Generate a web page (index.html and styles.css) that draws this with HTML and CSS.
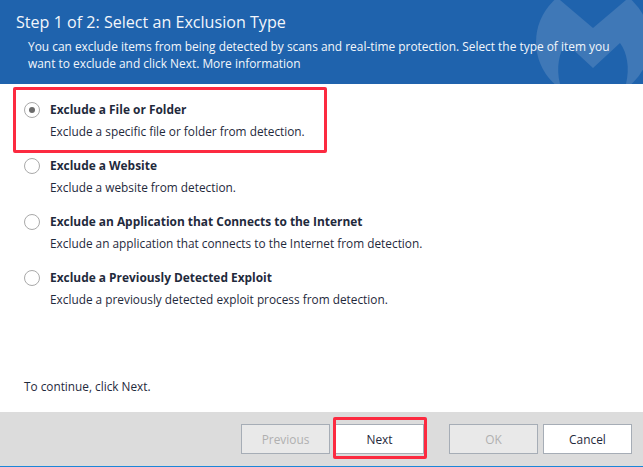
FILE: index.html
```html
<!DOCTYPE html>
<html lang="en">
<head>
<meta charset="utf-8">
<title>Select an Exclusion Type</title>
<link rel="stylesheet" href="styles.css">
</head>
<body>
<div class="window">
  <header class="header">
    <svg class="logo" width="120" height="84" viewBox="0 0 120 84">
      <circle class="logo-disc" cx="70" cy="42" r="57"/>
      <path class="logo-blue" d="M37 0L70 28L103 0Z"/>
      <path class="logo-blue" d="M37 84C33 68 36 52 43 43L70 68L97 43C104 52 107 68 103 84Z"/>
    </svg>
    <h1 class="title">Step 1 of 2: Select an Exclusion Type</h1>
    <p class="intro">You can exclude items from being detected by scans and real-time protection. Select the type of item you want to exclude and click Next. More information</p>
  </header>
  <main class="content">
    <ul class="options">
      <li class="option">
        <span class="radio radio-on"></span>
        <div><div class="opt-title">Exclude a File or Folder</div><div class="opt-desc">Exclude a specific file or folder from detection.</div></div>
      </li>
      <li class="option">
        <span class="radio"></span>
        <div><div class="opt-title">Exclude a Website</div><div class="opt-desc">Exclude a website from detection.</div></div>
      </li>
      <li class="option">
        <span class="radio"></span>
        <div><div class="opt-title">Exclude an Application that Connects to the Internet</div><div class="opt-desc">Exclude an application that connects to the Internet from detection.</div></div>
      </li>
      <li class="option">
        <span class="radio"></span>
        <div><div class="opt-title">Exclude a Previously Detected Exploit</div><div class="opt-desc">Exclude a previously detected exploit process from detection.</div></div>
      </li>
    </ul>
    <p class="hint">To continue, click Next.</p>
  </main>
  <footer class="footer">
    <button class="btn" disabled>Previous</button>
    <button class="btn btn-next">Next</button>
    <button class="btn btn-ok" disabled>OK</button>
    <button class="btn">Cancel</button>
  </footer>
  <div class="mark mark-option"></div>
  <div class="mark mark-next"></div>
</div>
</body>
</html>
```
FILE: styles.css
```css
* { box-sizing: border-box; }
html, body { margin: 0; padding: 0; }
body { background: #fff; font-family: "Open Sans", sans-serif; color: #1f2a3c; }
.window { position: relative; width: 643px; height: 467px; display: flex; flex-direction: column; overflow: hidden; border-bottom: 1px solid #1c86d8; }
.header { position: relative; height: 84px; background: #1f63ad; color: #f2f6fb; padding: 11px 16px 0; flex: none; }
.logo { position: absolute; right: 0; top: 0; }
.logo-disc { fill: #3f78b7; }
.logo-blue { fill: #1f63ad; }
.title { position: relative; margin: 0; font-size: 16.1px; font-weight: 400; line-height: 22px; }
.intro { position: relative; margin: 5px 0 0 12px; width: 590px; font-size: 11.92px; line-height: 17px; }
.content { flex: 1; display: flex; flex-direction: column; justify-content: space-between; padding: 16px 24px 18px; }
.options { list-style: none; margin: 0; padding: 0; display: flex; flex-direction: column; gap: 18px; }
.option { display: flex; gap: 10px; height: 38px; }
.radio { flex: none; width: 16px; height: 16px; margin-top: 2px; border: 1px solid #a9a9a9; border-radius: 50%; background: #fff; display: flex; align-items: center; justify-content: center; }
.radio-on::after { content: ""; width: 6px; height: 6px; border-radius: 50%; background: #6b6b6b; }
.opt-title { font-size: 11.92px; font-weight: 700; line-height: 18px; }
.opt-desc { font-size: 11.84px; line-height: 26px; }
.hint { margin: 0; font-size: 11.8px; line-height: 16px; }
.footer { flex: none; height: 54px; background: #dcdcdc; display: flex; align-items: flex-start; padding: 12px 11px 0 241px; }
.btn { width: 89px; height: 30px; padding: 0; border: 1px solid #a6adb6; background: #fff; color: #1f2a3c; font-family: inherit; font-size: 11.9px; }
.btn:disabled { background: #e9e9e9; color: #b0b0b0; }
.btn-next { margin-left: 5px; }
.btn-ok { margin-left: 25px; margin-right: 5px; }
.mark { position: absolute; border: 3px solid #fc2a40; border-radius: 2px; }
.mark-option { left: 13px; top: 87px; width: 314px; height: 66px; }
.mark-next { left: 333px; top: 417px; width: 94px; height: 42px; }
```
